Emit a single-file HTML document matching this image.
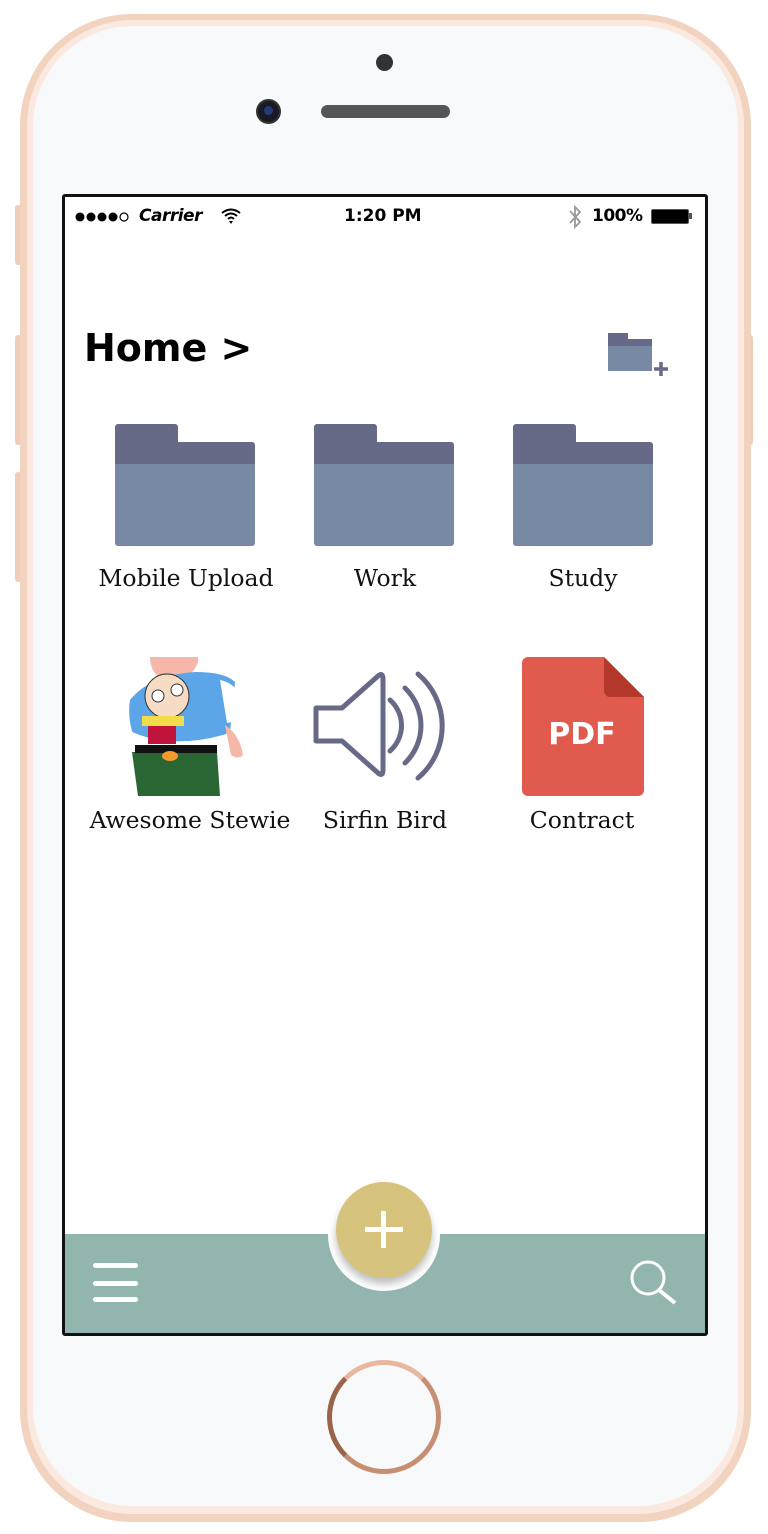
<!DOCTYPE html>
<html><head><style>
*{margin:0;padding:0;box-sizing:border-box}
body{width:768px;height:1534px;background:#fff;position:relative;overflow:hidden;font-family:"Liberation Sans",sans-serif}
.abs{position:absolute}
.lbl{position:absolute;font-family:"DejaVu Serif",serif;font-size:23.5px;color:#111;text-align:center;width:220px}
</style></head><body>
<div class="abs" style="left:15px;top:205px;width:7px;height:60px;background:#f0cdb8;border-radius:3px"></div>
<div class="abs" style="left:15px;top:335px;width:7px;height:110px;background:#f0cdb8;border-radius:3px"></div>
<div class="abs" style="left:15px;top:472px;width:7px;height:110px;background:#f0cdb8;border-radius:3px"></div>
<div class="abs" style="left:746px;top:335px;width:7px;height:110px;background:#f0cdb8;border-radius:3px"></div>
<div class="abs" style="left:20px;top:14px;width:731px;height:1508px;border-radius:112px;background:#f2d3c0;"></div>
<div class="abs" style="left:27px;top:20px;width:717px;height:1494px;border-radius:106px;background:#fbe9df;"></div>
<div class="abs" style="left:33px;top:26px;width:705px;height:1480px;border-radius:100px;background:#f8f9fb;"></div>
<div class="abs" style="left:376px;top:54px;width:17px;height:17px;border-radius:50%;background:#333"></div>
<div class="abs" style="left:256px;top:99px;width:25px;height:25px;border-radius:50%;background:#1a1a22;border:2px solid #333"></div>
<div class="abs" style="left:264px;top:106px;width:9px;height:9px;border-radius:50%;background:#243a7a"></div>
<div class="abs" style="left:321px;top:105px;width:129px;height:13px;border-radius:7px;background:#555"></div>
<div class="abs" style="left:62px;top:194px;width:646px;height:1142px;border:3px solid #111;border-radius:3px;background:#fff;overflow:hidden">
  <div class="abs" style="left:0;top:1037px;width:640px;height:100px;background:#92b5b0"></div>
</div>
<svg class="abs" style="left:74px;top:210px" width="62" height="14"><circle cx="6" cy="7" r="4.5"/><circle cx="17" cy="7" r="4.5"/><circle cx="28" cy="7" r="4.5"/><circle cx="39" cy="7" r="4.5"/><circle cx="50" cy="7" r="4" fill="none" stroke="#000" stroke-width="1.2"/></svg>
<div class="abs" style="left:139px;top:206px;font-family:'DejaVu Sans',sans-serif;font-size:17px;font-style:italic;font-weight:bold;color:#000;letter-spacing:-0.5px">Carrier</div>
<svg class="abs" style="left:220px;top:207px" width="22" height="18" viewBox="0 0 22 18"><path d="M2 6 Q11 -1 20 6 M5 9 Q11 4 17 9 M8 12 Q11 9 14 12" stroke="#000" stroke-width="2" fill="none"/><path d="M9 14 L13 14 L11 17Z" fill="#000"/></svg>
<div class="abs" style="left:344px;top:206px;font-family:'DejaVu Sans',sans-serif;font-size:17px;font-weight:bold;color:#000">1:20 PM</div>
<svg class="abs" style="left:568px;top:205px" width="14" height="24" viewBox="0 0 14 24"><path d="M2 6 L12 17 L7 22 L7 2 L12 7 L2 18" stroke="#999" stroke-width="1.8" fill="none"/></svg>
<div class="abs" style="left:592px;top:206px;font-family:'DejaVu Sans',sans-serif;font-size:17px;font-weight:bold;color:#000;letter-spacing:-0.5px">100%</div>
<div class="abs" style="left:651px;top:209px;width:38px;height:15px;border:1.5px solid #555;border-radius:2px;background:#000"></div>
<div class="abs" style="left:689px;top:213px;width:3px;height:6px;background:#555"></div>
<div class="abs" style="left:84px;top:326px;font-family:'DejaVu Sans',sans-serif;font-weight:bold;font-size:38px;color:#000">Home &gt;</div>
<svg class="abs" style="left:607px;top:332px" width="65" height="45"><rect x="1" y="1" width="20" height="10" fill="#676a87"/><rect x="1" y="7" width="44" height="8" fill="#676a87"/><rect x="1" y="14" width="44" height="25" fill="#7889a3"/><path d="M54 30 v14 M47 37 h14" stroke="#676a87" stroke-width="3.5"/></svg>
<svg class="abs" style="left:0;top:0" width="768" height="800">
<g id="f"><path d="M118 424 h57 a3 3 0 0 1 3 3 v15 h74 a3 3 0 0 1 3 3 v20 h-140 v-38 a3 3 0 0 1 3-3z" fill="#676a87"/><path d="M115 464 h140 v79 a3 3 0 0 1-3 3 h-134 a3 3 0 0 1-3-3z" fill="#7889a3"/></g>
<use href="#f" x="199"/><use href="#f" x="398"/>
<g stroke="#676a87" stroke-width="5" fill="none" stroke-linejoin="round" stroke-linecap="round">
<path d="M316 708 h26 l36 -32 q5 -4 5 3 v91 q0 7 -5 3 l-36 -32 h-26z"/>
<path d="M390 700 a34 34 0 0 1 0 51"/>
<path d="M405 688 a52 52 0 0 1 0 75"/>
<path d="M418 674 a68 68 0 0 1 0 104"/>
</g>
<path d="M528 657 h76 l40 40 v93 a6 6 0 0 1-6 6 h-110 a6 6 0 0 1-6-6 v-127 a6 6 0 0 1 6-6z" fill="#e05a4e"/>
<path d="M604 657 v34 a6 6 0 0 0 6 6 h34z" fill="#b5382d"/>
<text x="582" y="744" text-anchor="middle" font-family="DejaVu Sans,sans-serif" font-weight="bold" font-size="30" fill="#fff">PDF</text>
<rect x="118" y="657" width="138" height="139" fill="#fff"/>
<path d="M150 657 q0 20 20 25 q20 0 28 -20 l0 -5z" fill="#f6b7a8"/>
<path d="M130 700 q20 -25 65 -28 q30 0 40 10 l-5 50 q-20 10 -50 10 l-45 -2 q-8 -20 -5 -40z" fill="#5ca5e8"/>
<path d="M220 680 q25 5 22 40 l-15 3 z" fill="#fff"/>
<path d="M225 725 q15 10 18 30 q-5 5 -12 0z" fill="#f6b7a8"/>
<path d="M128 730 q40 20 95 5 l-5 20 q-45 10 -85 -2z" fill="#fff"/>
<path d="M132 752 h85 l3 44 h-82z" fill="#2a6634"/>
<rect x="135" y="745" width="82" height="8" fill="#111"/>
<circle cx="167" cy="696" r="22" fill="#f7dcc5" stroke="#333" stroke-width="1"/>
<circle cx="158" cy="696" r="6" fill="#fff" stroke="#333"/><circle cx="177" cy="690" r="6" fill="#fff" stroke="#333"/>
<rect x="142" y="716" width="42" height="10" fill="#f3dc4a"/>
<rect x="148" y="726" width="28" height="18" fill="#c0143c"/>
<ellipse cx="170" cy="756" rx="8" ry="5" fill="#f39a2c"/>
</svg>
<div class="lbl" style="left:76px;top:564px">Mobile Upload</div>
<div class="lbl" style="left:275px;top:564px">Work</div>
<div class="lbl" style="left:473px;top:564px">Study</div>
<div class="lbl" style="left:80px;top:806px">Awesome Stewie</div>
<div class="lbl" style="left:275px;top:806px">Sirfin Bird</div>
<div class="lbl" style="left:472px;top:806px">Contract</div>
<div class="abs" style="left:328px;top:1179px;width:112px;height:112px;border-radius:50%;background:#fff"></div>
<div class="abs" style="left:336px;top:1182px;width:96px;height:96px;border-radius:50%;background:#d6c47e;box-shadow:0 6px 8px rgba(0,0,0,0.25)"></div>
<div class="abs" style="left:365px;top:1227px;width:38px;height:5px;background:#fff"></div>
<div class="abs" style="left:381px;top:1211px;width:5px;height:37px;background:#fff"></div>
<div class="abs" style="left:93px;top:1263px;width:45px;height:5px;border-radius:3px;background:#fff"></div>
<div class="abs" style="left:93px;top:1281px;width:45px;height:5px;border-radius:3px;background:#fff"></div>
<div class="abs" style="left:93px;top:1297px;width:45px;height:5px;border-radius:3px;background:#fff"></div>
<svg class="abs" style="left:628px;top:1258px" width="52" height="50"><circle cx="20" cy="20" r="16" stroke="#fff" stroke-width="3" fill="none"/><path d="M31 32 L47 45" stroke="#fff" stroke-width="4"/></svg>
<div class="abs" style="left:327px;top:1360px;width:114px;height:114px;border-radius:50%;border:5px solid #c68f73;border-top-color:#e8b79f;border-left-color:#9a6448"></div>
</body></html>
